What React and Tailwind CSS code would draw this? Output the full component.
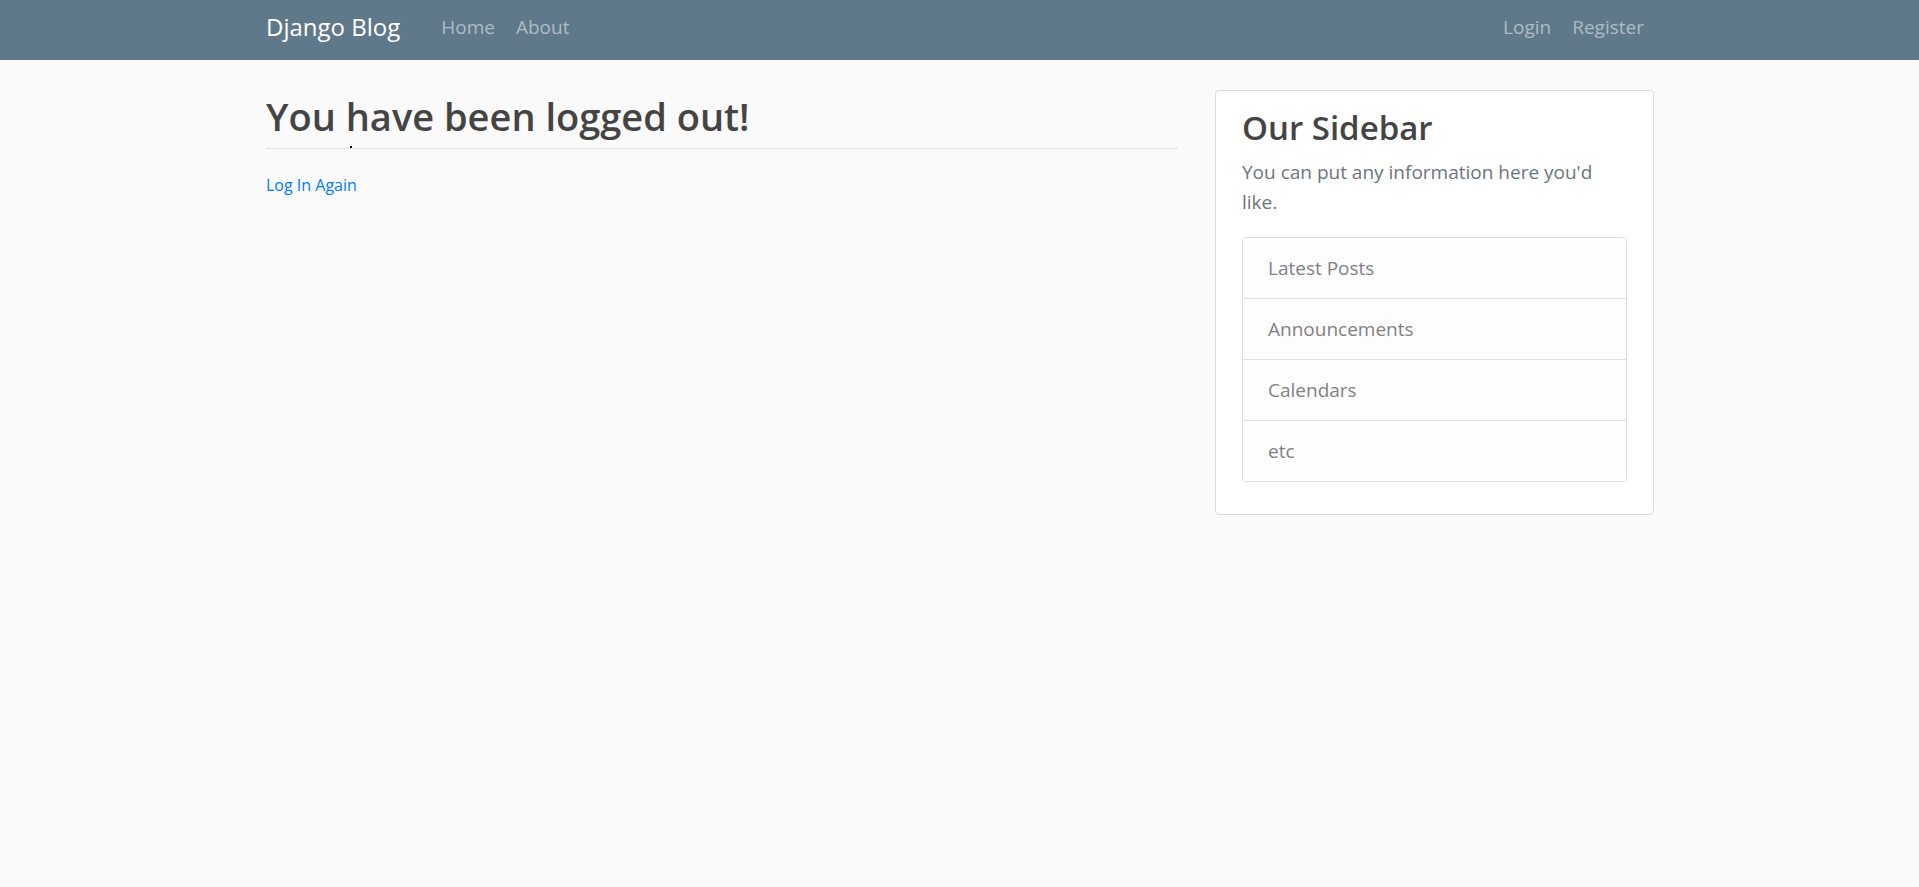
import React from 'react';

const font = { fontFamily: "'Open Sans', 'Noto Sans', sans-serif" };

const links = ['Latest Posts', 'Announcements', 'Calendars', 'etc'];

const App = () => {
  return (
    <div className="min-h-[887px] bg-[#fafafa]" style={font}>
      {/* Navbar */}
      <nav className="h-[60px] bg-[#5f788a]">
        <div className="mx-auto flex h-full w-[1425px] items-center px-[19px] pb-[6px]">
          <a className="mr-[41px] text-[24px] leading-none text-white">Django Blog</a>
          <div className="flex items-center gap-[21px] text-[19px] leading-none text-[#afbcc5]">
            <a>Home</a>
            <a>About</a>
          </div>
          <div className="ml-auto mr-[9px] flex items-center gap-[21px] text-[19px] leading-none text-[#afbcc5]">
            <a>Login</a>
            <a>Register</a>
          </div>
        </div>
      </nav>

      {/* Main */}
      <main className="mx-auto flex w-[1425px] pt-[30px]">
        <div className="w-[950px] px-[19px]">
          <h2 className="mb-[6px] text-[38px] font-semibold leading-[52px] text-[#444444]">You have been logged out!</h2>
          <div className="relative border-t border-[#dee2e6] pt-[20px] text-[20px] leading-[30px]">
            <span className="absolute left-[84px] top-[-3px] h-[2px] w-[2px] bg-black" />
            <small className="text-[16px]">
              <a className="text-[#007bff]">Log In Again</a>
            </small>
          </div>
        </div>

        <aside className="w-[475px] px-[18px]">
          <div className="rounded-[4px] border border-[#dddddd] bg-white px-[26px] pb-[12px] pt-[14px]">
            <h3 className="mb-[6px] text-[33px] font-semibold leading-[46px] text-[#444444]">Our Sidebar</h3>
            <p className="mb-[20px] text-[19px] leading-[30px] text-[#6c757d]">
              You can put any information here you'd like.
            </p>
            <ul className="mb-[20px] overflow-hidden rounded-[4px] border border-[#dfdfdf]">
              {links.map((l, i) => (
                <li
                  key={l}
                  className={`bg-[#fdfdfe] px-[25px] py-[15px] text-[19px] leading-[30px] text-[#818182] ${i > 0 ? 'border-t border-[#dfdfdf]' : ''}`}
                >
                  {l}
                </li>
              ))}
            </ul>
          </div>
        </aside>
      </main>
    </div>
  );
};

export default App;
